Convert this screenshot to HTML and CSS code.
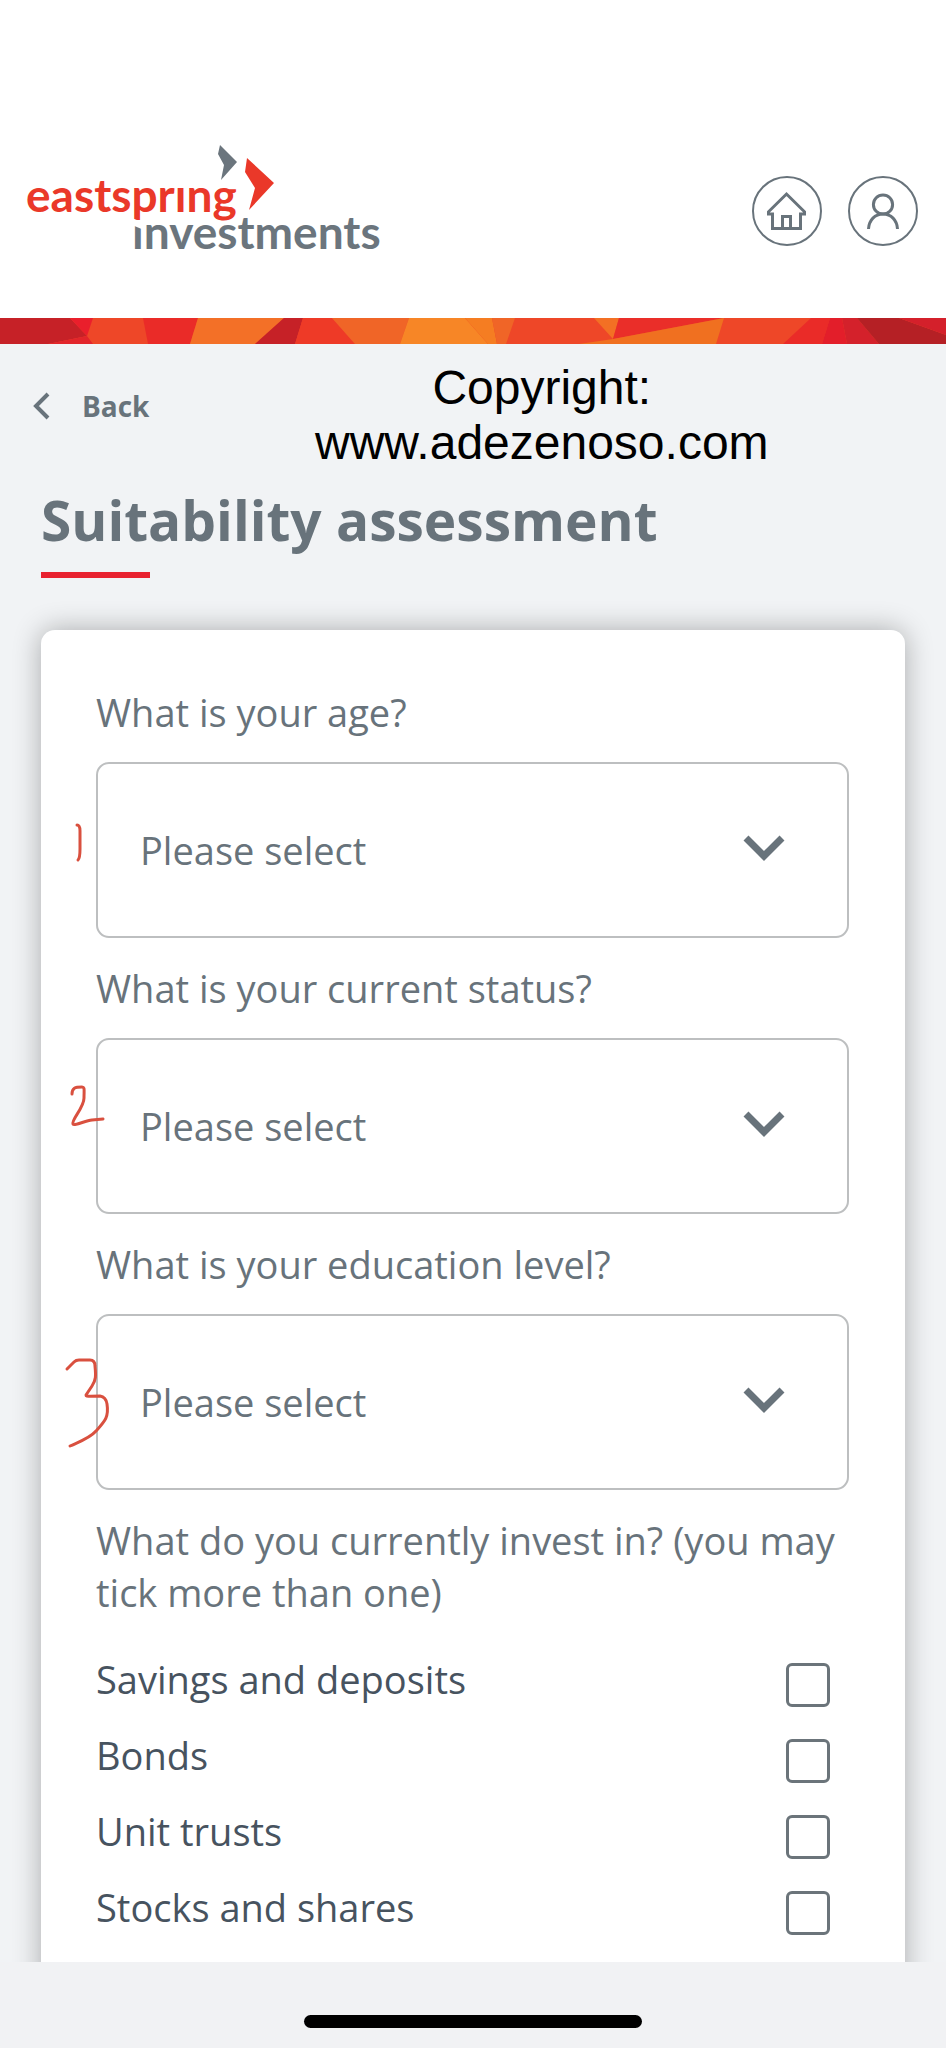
FILE: index.html
```html
<!DOCTYPE html>
<html lang="en">
<head>
    <meta charset="UTF-8">
    <meta name="viewport" content="width=device-width, initial-scale=1.0">
    <title>Suitability assessment</title>
    <link rel="stylesheet" href="styles.css">
</head>
<body>
    <header class="site-header">
        <a class="logo" href="#" aria-label="eastspring investments">
            <svg width="360" height="120" viewBox="0 0 360 120">
                <polygon class="logo-grey" points="194,5 211,22 195,40 198,25 192,14"/>
                <polygon class="logo-red" points="221,18 248,43 223,70 229,48 219,32"/>
                <text class="logo-text logo-red" x="0" y="72">eastsprıng</text>
                <text class="logo-text logo-grey" x="106" y="109">ınvestments</text>
                <polygon points="106,78 118,83 118,90 106,85" fill="#fff"/>
            </svg>
        </a>
        <nav class="header-links">
            <a class="circle-link" href="#" aria-label="Home">
                <svg width="70" height="70" viewBox="0 0 70 70">
                    <circle cx="35" cy="35" r="34" stroke-width="2"/>
                    <path d="M20.5 38H16.5V35.8L34.5 18L52.5 35.8V38H48.5V52.5H20.5ZM30.5 52V40.5H38.5V52"/>
                </svg>
            </a>
            <a class="circle-link" href="#" aria-label="Profile">
                <svg width="70" height="70" viewBox="0 0 70 70">
                    <circle cx="35" cy="35" r="34" stroke-width="2"/>
                    <circle cx="35" cy="28.5" r="9.6"/>
                    <path d="M20.5 53C21 44 27 38 35 38S49 44 49.5 53"/>
                </svg>
            </a>
        </nav>
    </header>

    <svg class="mosaic" viewBox="0 0 946 26" preserveAspectRatio="none">
        <rect width="946" height="26" fill="#ee4728"/>
        <polygon points="0,0 70,0 87,18 48,26 0,26" fill="#c62127"/>
        <polygon points="70,0 93,0 87,18" fill="#ea1f2c"/>
        <polygon points="87,18 93,26 48,26" fill="#e2252b"/>
        <polygon points="143,0 198,0 190,26 148,26" fill="#ea2b28"/>
        <polygon points="198,0 284,0 255,26 190,26" fill="#f37027"/>
        <polygon points="284,0 303,0 295,26 255,26" fill="#c62127"/>
        <polygon points="303,0 332,0 355,26 295,26" fill="#ee3a27"/>
        <polygon points="332,0 409,0 400,26 355,26" fill="#f06527"/>
        <polygon points="409,0 465,0 488,26 400,26" fill="#f78626"/>
        <polygon points="465,0 492,0 497,26 488,26" fill="#f57d22"/>
        <polygon points="492,0 515,0 506,26 497,26" fill="#f06527"/>
        <polygon points="594,0 619,0 613,21" fill="#f37024"/>
        <polygon points="619,0 724,0 613,21" fill="#ea2e29"/>
        <polygon points="724,0 716,26 579,26 613,21" fill="#f07020"/>
        <polygon points="811,0 830,0 822,26 783,26" fill="#ea2b28"/>
        <polygon points="830,0 842,0 847,26 822,26" fill="#e31e2a"/>
        <polygon points="842,0 857,0 879,26 847,26" fill="#d4212b"/>
        <polygon points="857,0 899,0 946,17 946,26 879,26" fill="#b52025"/>
        <polygon points="899,0 946,0 946,17" fill="#d4202b"/>
    </svg>

    <main class="page">
        <p class="copyright">Copyright:<br>www.adezenoso.com</p>

        <button class="back" type="button">
            <svg width="18" height="28" viewBox="0 0 18 28"><path d="M15 2L3 14L15 26"/></svg>
            Back
        </button>

        <h1 class="title">Suitability assessment</h1>

        <form class="card">
            <div class="field">
                <label class="question" for="age">What is your age?</label>
                <div class="select-box">
                    <select id="age"><option>Please select</option></select>
                    <svg class="chevron" width="42" height="28" viewBox="0 0 42 28"><path d="M3 4L21 22L39 4"/></svg>
                    <svg class="note" width="60" height="176" viewBox="0 0 60 176"><path d="M17 63Q20 63 20 69V87Q20 96 18 98"/></svg>
                </div>
            </div>
            <div class="field">
                <label class="question" for="status">What is your current status?</label>
                <div class="select-box">
                    <select id="status"><option>Please select</option></select>
                    <svg class="chevron" width="42" height="28" viewBox="0 0 42 28"><path d="M3 4L21 22L39 4"/></svg>
                    <svg class="note" width="60" height="176" viewBox="0 0 60 176"><path d="M12 56C12 50 15 49 22 49C25 49 24 52 24 60C24 70 11 82 13 86C14 88 25 83 32 82L43 81"/></svg>
                </div>
            </div>
            <div class="field">
                <label class="question" for="education">What is your education level?</label>
                <div class="select-box">
                    <select id="education"><option>Please select</option></select>
                    <svg class="chevron" width="42" height="28" viewBox="0 0 42 28"><path d="M3 4L21 22L39 4"/></svg>
                    <svg class="note" width="60" height="176" viewBox="0 0 60 176"><path d="M7 55L14 48Q16 46 19 46H30Q35 46 35 52C36 62 36 66 32 72L26 81C26 83 27 82 40 82Q46 83 47 90C49 103 45 107 36 117C30 124 21 127 10 132"/></svg>
                </div>
            </div>

            <fieldset class="options">
                <legend class="question">What do you currently invest in? (you may tick more than one)</legend>
                <div class="option">
                    <label for="savings">Savings and deposits</label>
                    <input id="savings" type="checkbox">
                </div>
                <div class="option">
                    <label for="bonds">Bonds</label>
                    <input id="bonds" type="checkbox">
                </div>
                <div class="option">
                    <label for="trusts">Unit trusts</label>
                    <input id="trusts" type="checkbox">
                </div>
                <div class="option">
                    <label for="stocks">Stocks and shares</label>
                    <input id="stocks" type="checkbox">
                </div>
            </fieldset>
        </form>
    </main>

    <footer class="home-area">
        <div class="home-bar"></div>
    </footer>
</body>
</html>
```
FILE: styles.css
```css
* {
    box-sizing: border-box;
}

body {
    margin: 0;
    min-height: 100vh;
    display: flex;
    flex-direction: column;
    font-family: "Open Sans", "Noto Sans", sans-serif;
    font-size: 38px;
    line-height: 52px;
    color: #68737b;
    background: #f1f3f5;
}

.site-header {
    display: flex;
    justify-content: space-between;
    align-items: flex-start;
    padding: 140px 28px 58px 26px;
    background: #fff;
}

.logo svg,
.circle-link svg {
    display: block;
}

.logo-text {
    font-family: Lato, sans-serif;
    font-weight: 700;
    font-size: 46px;
}

.logo-red {
    fill: #ea3829;
}

.logo-grey {
    fill: #6b757d;
}

.header-links {
    display: flex;
    gap: 26px;
    padding-top: 36px;
}

.circle-link svg {
    fill: none;
    stroke: #68737b;
    stroke-width: 3;
}

.mosaic {
    display: block;
    width: 100%;
    height: 26px;
}

/* the card runs on below the visible area */
.page {
    position: relative;
    flex: 1;
    overflow: hidden;
    padding: 36px 41px 0;
}

.copyright {
    position: absolute;
    top: 16px;
    left: 315px;
    margin: 0;
    font-family: "Liberation Sans", Arial, sans-serif;
    font-size: 48px;
    line-height: 55px;
    text-align: center;
    color: #000;
}

.back {
    display: flex;
    align-items: center;
    gap: 31px;
    margin-left: -8px;
    padding: 0;
    border: none;
    background: none;
    font-family: inherit;
    font-size: 28px;
    font-weight: 700;
    line-height: 52px;
    color: #68737b;
    cursor: pointer;
}

.back svg {
    fill: none;
    stroke: #68737b;
    stroke-width: 4;
}

.title {
    margin: 50px 0 52px;
    font-size: 55px;
    line-height: 76px;
    font-weight: 700;
}

.title::after {
    content: "";
    display: block;
    width: 109px;
    height: 6px;
    margin-top: 14px;
    background: #e8212f;
}

.card {
    margin-bottom: -40px;
    padding: 56px 56px 66px 55px;
    border-radius: 14px;
    background: #fff;
    box-shadow: 0 0 28px rgba(0, 0, 0, 0.3);
}

.field {
    margin-bottom: 24px;
}

.question {
    display: block;
    padding: 0;
}

.select-box {
    position: relative;
    margin-top: 24px;
}

.select-box select {
    display: block;
    width: 100%;
    height: 176px;
    padding: 0 110px 0 42px;
    border: 2px solid #bdbfc0;
    border-radius: 13px;
    appearance: none;
    background: #fff;
    font: inherit;
    color: inherit;
}

.chevron {
    position: absolute;
    right: 64px;
    top: 72px;
    fill: none;
    stroke: #68737b;
    stroke-width: 7;
    pointer-events: none;
}

/* handwritten numbers beside each box */
.note {
    position: absolute;
    left: -36px;
    top: 0;
    fill: none;
    stroke: #d9503f;
    stroke-width: 3;
    stroke-linecap: round;
    stroke-linejoin: round;
    pointer-events: none;
}

.options {
    margin: 0;
    padding: 0;
    border: none;
}

.options .question {
    margin-bottom: 35px;
}

.option {
    display: flex;
    justify-content: space-between;
    align-items: flex-start;
    padding-right: 19px;
    color: #47535f;
}

.option + .option {
    margin-top: 21px;
}

.option label {
    min-height: 55px;
}

.option input {
    width: 44px;
    height: 44px;
    margin: 10px 0 0;
    border: 3px solid #6b747a;
    border-radius: 6px;
    appearance: none;
    background: #fff;
}

.option input:checked {
    background: #68737b;
}

.home-area {
    display: flex;
    justify-content: center;
    padding: 53px 0 20px;
    background: #f1f2f4;
}

.home-bar {
    width: 338px;
    height: 13px;
    border-radius: 7px;
    background: #000;
}
```
